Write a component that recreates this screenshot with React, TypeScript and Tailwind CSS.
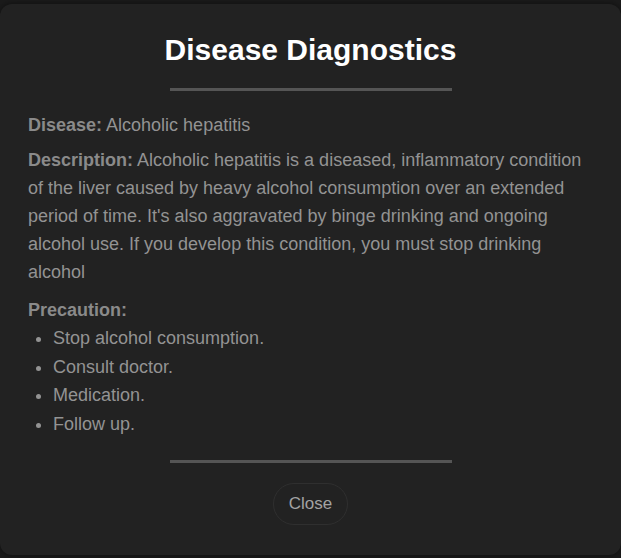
export default function App() {
  const precautions = [
    'Stop alcohol consumption.',
    'Consult doctor.',
    'Medication.',
    'Follow up.',
  ];

  return (
    <div
      className="w-[621px] h-[558px] bg-[#1b1b1b] pt-[4px] overflow-hidden"
      style={{ fontFamily: '"Liberation Sans", Arial, sans-serif' }}
    >
      <div className="h-[551px] bg-[#222222] rounded-xl px-7 pt-[26px] shadow-[0_0_6px_rgba(0,0,0,0.5)]">
        <h2 className="text-center text-white font-bold text-[30px] leading-[40px]">
          Disease Diagnostics
        </h2>
        <div className="w-[282px] h-[3px] bg-[#555555] mx-auto mt-[18px]"></div>

        <div className="mt-[20px] text-[18px] leading-[28px] text-[#939393]">
          <p>
            <span className="font-bold text-[#8a8a8a]">Disease:</span> Alcoholic hepatitis
          </p>
          <p className="mt-[7px]">
            <span className="font-bold text-[#8a8a8a]">Description:</span> Alcoholic hepatitis is a
            diseased, inflammatory condition of the liver caused by heavy alcohol consumption over an
            extended period of time. It's also aggravated by binge drinking and ongoing alcohol use.
            If you develop this condition, you must stop drinking alcohol
          </p>
          <p className="mt-[10px] font-bold text-[#8a8a8a]">Precaution:</p>
          <ul className="list-disc pl-[25px] leading-[28.5px]">
            {precautions.map((p) => (
              <li key={p}>{p}</li>
            ))}
          </ul>
        </div>

        <div className="w-[282px] h-[3px] bg-[#555555] mx-auto mt-[22px]"></div>

        <div className="flex justify-center mt-[20px]">
          <button className="h-[42px] px-[15px] rounded-full border border-[#2f2f2f] bg-[#222222] text-[#a3a3a3] text-[17px] leading-[20px]">
            Close
          </button>
        </div>
      </div>
    </div>
  );
}
